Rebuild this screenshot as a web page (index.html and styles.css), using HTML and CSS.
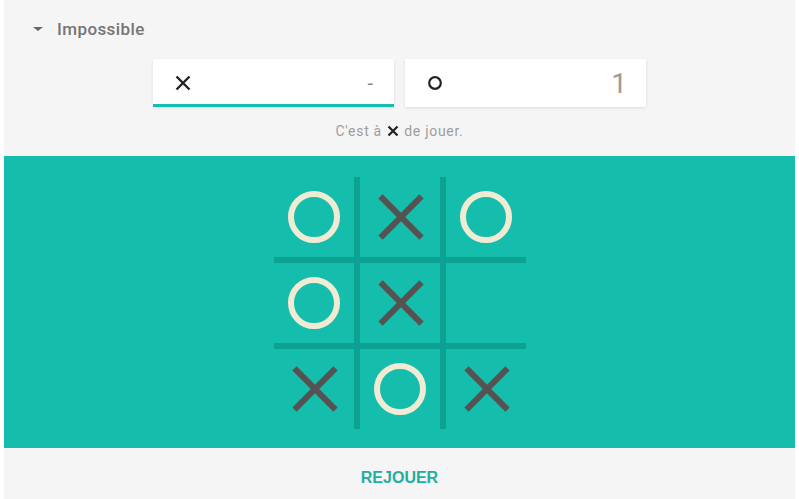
FILE: index.html
```html
<!DOCTYPE html>
<html lang="fr">
<head>
    <meta charset="UTF-8">
    <meta name="viewport" content="width=device-width, initial-scale=1.0">
    <title>Morpion</title>
    <link rel="stylesheet" href="styles.css">
</head>
<body>
    <div class="game">
        <!-- Level picker and scores -->
        <div class="top">
            <div class="level">
                <span class="caret"></span>
                <span class="level-name">Impossible</span>
            </div>

            <div class="scores">
                <div class="score active">
                    <svg class="mark" width="16" height="16" viewBox="0 0 16 16">
                        <path d="M1.5 1.5 L14.5 14.5 M14.5 1.5 L1.5 14.5" stroke="#222" stroke-width="2.4" fill="none"/>
                    </svg>
                    <span class="score-value dash">-</span>
                </div>
                <div class="score">
                    <svg class="mark" width="16" height="16" viewBox="0 0 16 16">
                        <circle cx="8" cy="8" r="5.8" stroke="#222" stroke-width="2.2" fill="none"/>
                    </svg>
                    <span class="score-value">1</span>
                </div>
            </div>

            <p class="turn">C'est à
                <svg class="turn-mark" width="12" height="12" viewBox="0 0 16 16">
                    <path d="M2 2 L14 14 M14 2 L2 14" stroke="#222" stroke-width="3" fill="none"/>
                </svg>
                de jouer.</p>
        </div>

        <!-- Board -->
        <div class="board-wrap">
            <div class="board">
                <div class="cell"><span class="o"></span></div>
                <div class="cell"><span class="x"></span></div>
                <div class="cell"><span class="o"></span></div>
                <div class="cell"><span class="o"></span></div>
                <div class="cell"><span class="x"></span></div>
                <div class="cell"></div>
                <div class="cell"><span class="x"></span></div>
                <div class="cell"><span class="o"></span></div>
                <div class="cell"><span class="x"></span></div>
            </div>
        </div>

        <div class="footer">
            <button class="replay">REJOUER</button>
        </div>
    </div>
</body>
</html>
```

FILE: styles.css
```css
body {
    margin: 0;
    background-color: #fff;
    font-family: Roboto, "Liberation Sans", sans-serif;
}
.game {
    margin: 0 4px;
    background-color: #f5f5f5;
    height: 499px;
}
.top {
    padding: 18px 0 17px;
}
.level {
    display: flex;
    align-items: center;
    height: 22px;
    padding-left: 29px;
}
.caret {
    width: 0;
    height: 0;
    border-left: 5px solid transparent;
    border-right: 5px solid transparent;
    border-top: 4px solid #666;
    margin-right: 14px;
}
.level-name {
    font-size: 17px;
    font-weight: 500;
    color: #757575;
    letter-spacing: 0.4px;
}
.scores {
    display: flex;
    justify-content: center;
    gap: 11px;
    margin-top: 19px;
}
.score {
    width: 241px;
    height: 48px;
    box-sizing: border-box;
    background-color: #fff;
    display: flex;
    align-items: center;
    justify-content: space-between;
    padding: 0 19px 0 22px;
    box-shadow: 0 1px 3px rgba(0, 0, 0, 0.1);
}
.score.active {
    border-bottom: 3px solid #14bdac;
    padding-top: 3px;
}
.score-value {
    font-size: 28px;
    font-weight: 400;
    color: #a09a90;
}
.score-value.dash {
    font-size: 20px;
    color: #888;
    margin-right: 2px;
}
.turn {
    margin: 16px 0 0;
    text-align: center;
    font-size: 14px;
    line-height: 16px;
    letter-spacing: 0.7px;
    color: #9e9e9e;
}
.turn-mark {
    vertical-align: -1px;
    margin: 0 1px;
}
/* Board */
.board-wrap {
    background-color: #14bdac;
    padding: 21px 0 19px;
    display: flex;
    justify-content: center;
}
.board {
    display: grid;
    grid-template-columns: repeat(3, 80px);
    grid-template-rows: repeat(3, 80px);
    gap: 6px;
    background-color: #0da192;
}
.cell {
    background-color: #14bdac;
    display: flex;
    align-items: center;
    justify-content: center;
}
.o {
    width: 40px;
    height: 40px;
    border: 6px solid #f2ebd3;
    border-radius: 50%;
}
.x {
    width: 48px;
    height: 48px;
    position: relative;
}
.x::before,
.x::after {
    content: "";
    position: absolute;
    left: -4px;
    top: 21px;
    width: 58px;
    height: 6px;
    background-color: #575151;
    transform: rotate(45deg);
}
.x::after {
    transform: rotate(-45deg);
}
.footer {
    height: 51px;
    box-sizing: border-box;
    padding-top: 9px;
    display: flex;
    align-items: center;
    justify-content: center;
}
.replay {
    background: none;
    border: none;
    font-family: "Liberation Sans", Arial, sans-serif;
    font-size: 16px;
    font-weight: bold;
    color: #1fae9f;
    padding: 0;
    cursor: pointer;
}
```
